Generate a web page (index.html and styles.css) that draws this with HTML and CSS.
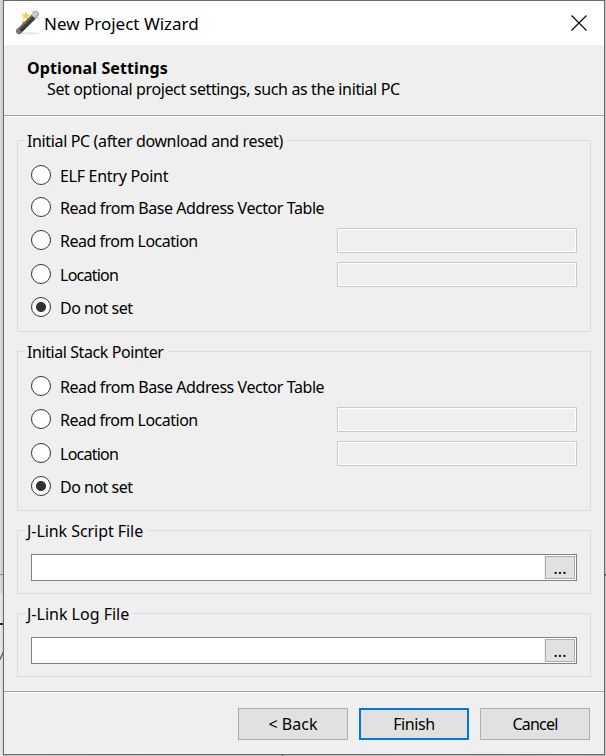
FILE: index.html
```html
<!DOCTYPE html>
<html lang="en">
<head>
<meta charset="utf-8">
<title>New Project Wizard</title>
<link rel="stylesheet" href="styles.css">
</head>
<body>
<div class="behind"><i class="panel"></i><i class="rule"></i><i class="dash"></i><i class="slash"></i><i class="rule-right"></i><i class="tick"></i></div>
<main class="window">
  <header class="titlebar">
    <svg class="wand" width="26" height="26" viewBox="0 0 26 26">
      <defs>
        <linearGradient id="tip" x1="0" y1="0" x2="1" y2="1">
          <stop offset="0" stop-color="#fff"/><stop offset="1" stop-color="#999"/>
        </linearGradient>
      </defs>
      <ellipse cx="15" cy="23.3" rx="10" ry="1.2" fill="#e9e9e9"/>
      <path d="M11 1l1.300 3.300 3.500.5-2.800 2 .4 3.500-2.600-2.200-3.200 1.600 1-3.400L6.200 4l3.500.2z" fill="#f0d348"/>
      <path d="M18.500 0l.8 1.500 1.500.2-1.500 1-.8 1.300-.6-1.500-1.500-.6 1.500-.5z M8 10l.8 1.500 1.500.5-1.500.9-.8 1.300-.7-1.400-1.500-.6 1.500-.7z M23 7l1 1-1 1-1-1z" fill="#e6c33c"/>
      <path d="M1.500 19.800L17 4.500l4 4L5.500 23.800Q3.500 24.800 2 23.300 .3 21.600 1.500 19.800z" fill="#3c3c3c"/>
      <path d="M3.500 19.500L17.500 5.800" stroke="#777" stroke-width="1.200"/>
      <path d="M16.500 5L20 1.700q1.400-.9 2.800.5t.6 2.800L20.200 8.700z" fill="url(#tip)" stroke="#777" stroke-width=".7"/>
      <path d="M1.500 19.800L3.200 18.200l4 4-1.700 1.600Q3.500 24.800 2 23.300 .3 21.600 1.500 19.800z" fill="#777"/>
    </svg>
    <h1 class="title">New Project Wizard</h1>
    <svg class="close" width="16" height="16" viewBox="0 0 16 16"><path d="M.5.5l15 15M15.500.5l-15 15"/></svg>
  </header>
  <section class="intro">
    <h2 class="heading">Optional Settings</h2>
    <p class="sub">Set optional project settings, such as the initial PC</p>
  </section>
  <section class="content">
    <div class="group pc">
      <div class="legend"><span class="t-pc">Initial PC (after download and reset)</span></div>
      <div class="row"><i class="radio"></i><span class="t-elf">ELF Entry Point</span></div>
      <div class="row"><i class="radio"></i><span class="t-base">Read from Base Address Vector Table</span></div>
      <div class="row tall"><i class="radio"></i><span class="t-read">Read from Location</span><i class="field"></i></div>
      <div class="row tall"><i class="radio"></i><span class="t-loc">Location</span><i class="field"></i></div>
      <div class="row"><i class="radio on"></i><span class="t-not">Do not set</span></div>
    </div>
    <div class="group sp">
      <div class="legend"><span class="t-sp">Initial Stack Pointer</span></div>
      <div class="row"><i class="radio"></i><span class="t-base">Read from Base Address Vector Table</span></div>
      <div class="row tall"><i class="radio"></i><span class="t-read">Read from Location</span><i class="field"></i></div>
      <div class="row tall"><i class="radio"></i><span class="t-loc">Location</span><i class="field"></i></div>
      <div class="row"><i class="radio on"></i><span class="t-not">Do not set</span></div>
    </div>
    <div class="group file">
      <div class="legend"><span class="t-script">J-Link Script File</span></div>
      <div class="path"><span class="browse">...</span></div>
    </div>
    <div class="group file">
      <div class="legend"><span class="t-log">J-Link Log File</span></div>
      <div class="path"><span class="browse">...</span></div>
    </div>
  </section>
  <footer class="actions">
    <div class="button"><span class="t-back">&lt; Back</span></div>
    <div class="button primary"><span class="t-finish">Finish</span></div>
    <div class="button"><span class="t-cancel">Cancel</span></div>
  </footer>
</main>
</body>
</html>
```
FILE: styles.css
```css
* { box-sizing: border-box; }
body {
  margin: 0;
  width: 606px;
  height: 756px;
  overflow: hidden;
  position: relative;
  background: linear-gradient(90deg, #dcdcdc, #c4c4c4 3px, #b4b4b4 604px, #c8c8c8);
  font: 16px/20px "Noto Sans", "Open Sans", sans-serif;
  color: #000;
}
h1, h2, p { margin: 0; font-size: inherit; }
span { white-space: nowrap; }

.behind i { position: absolute; }
.panel { left: 0; top: 593px; width: 3px; height: 163px; background: linear-gradient(90deg, #ededed, #d2d2d2); }
.rule { left: 0; top: 574px; width: 3px; height: 1px; background: #8c8c8c; }
.dash { left: 0; top: 623px; width: 3px; height: 2px; background: #222; }
.slash { left: 1px; top: 651px; width: 1px; height: 10px; background: #444; transform: rotate(25deg); }
.rule-right { left: 605px; top: 574px; width: 1px; height: 2px; background: #555; }
.tick { left: 282px; top: 755px; width: 1px; height: 1px; background: #555; }

.window {
  position: relative;
  width: 602px;
  height: 755px;
  margin-left: 3px;
  border: 1px solid #6b6b6b;
  background: #efefef;
}
.titlebar {
  height: 44px;
  display: flex;
  align-items: flex-start;
  background: #fff;
  padding: 9px 17px 0 11px;
}
.title { margin: 4px 0 0 3px; font-size: 17px; font-weight: 400; line-height: 20px; }
.close { margin: 5px 0 0 auto; stroke: #000; stroke-width: 1.1; }

.intro { height: 70px; padding: 13px 0 0 23px; }
.heading { font-weight: 700; line-height: 21px; letter-spacing: .11px; }
.sub { padding-left: 20px; line-height: 21px; letter-spacing: -.38px; }

.content {
  height: 577px;
  padding: 24px 13px 0;
  border-top: 1px solid #a0a0a0;
  border-bottom: 1px solid #a0a0a0;
  box-shadow: inset 0 1px #fff, 0 1px #fff;
}
.group { border: 1px solid #dcdcdc; padding-left: 13px; }
.pc { height: 192px; margin-bottom: 19px; }
.sp { height: 160px; margin-bottom: 19px; }
.file { height: 64px; margin-bottom: 19px; }
.legend {
  width: fit-content;
  height: 20px;
  margin: -10px 0 8px -6px;
  padding: 0 4px 0 2px;
  background: #efefef;
}
.row { height: 32px; display: flex; align-items: center; padding-right: 13px; }
.row span { margin: 2px 0 0 9px; }
.tall { height: 34px; }
.radio { width: 20px; height: 20px; border: 1px solid #333; border-radius: 50%; background: #fff; }
.on { background: radial-gradient(circle, #333 4.600px, #fff 5.400px); }
.field { width: 240px; height: 25px; margin: 1px 0 0 auto; border: 1px solid #cacaca; box-shadow: inset 0 0 0 1px #fff; }
.path {
  width: 546px;
  height: 27px;
  margin-top: 13px;
  padding: 1px;
  border: 1px solid #7f818b;
  background: #fff;
  display: flex;
  justify-content: flex-end;
}
.browse {
  width: 30px;
  height: 23px;
  border: 1px solid #adadad;
  background: #e1e1e1;
  text-align: center;
  line-height: 22px;
  box-shadow: -1px 0 #efefef;
}
.actions { display: flex; gap: 11px; justify-content: flex-end; padding: 16px 14px 0; }
.button {
  width: 110px;
  height: 32px;
  border: 1px solid #adadad;
  background: #e1e1e1;
  display: flex;
  align-items: center;
  justify-content: center;
}
.primary { border: 2px solid #0078d7; }

/* tracking per label */
.t-pc { letter-spacing: -.36px; }
.t-elf { letter-spacing: -.28px; }
.t-base { letter-spacing: -.43px; }
.t-read { letter-spacing: -.5px; }
.t-loc { letter-spacing: -.75px; }
.t-not { letter-spacing: -.5px; }
.t-sp { letter-spacing: -.42px; }
.t-script { letter-spacing: -.06px; }
.t-finish { letter-spacing: -.4px; }
.t-cancel { letter-spacing: -.8px; }
```
